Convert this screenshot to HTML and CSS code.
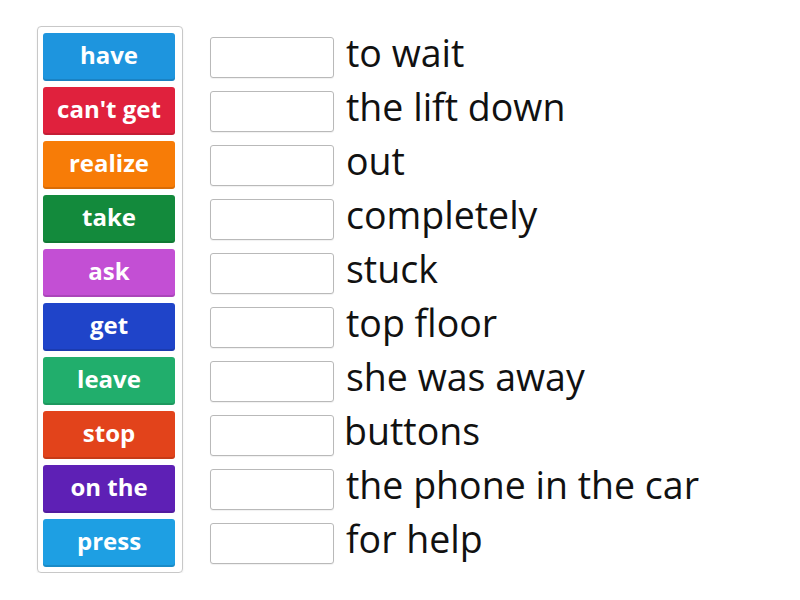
FILE: index.html
```html
<!DOCTYPE html>
<html>
<head>
<meta charset="utf-8">
<link rel="stylesheet" href="styles.css">
</head>
<body>
<div class="board">
  <div class="bank">
    <div class="tile c1">have</div>
    <div class="tile c2">can't get</div>
    <div class="tile c3">realize</div>
    <div class="tile c4">take</div>
    <div class="tile c5">ask</div>
    <div class="tile c6">get</div>
    <div class="tile c7">leave</div>
    <div class="tile c8">stop</div>
    <div class="tile c9">on the</div>
    <div class="tile c10">press</div>
  </div>
  <div class="targets">
    <div class="row"><div class="slot"></div><span class="phrase">to wait</span></div>
    <div class="row"><div class="slot"></div><span class="phrase">the lift down</span></div>
    <div class="row"><div class="slot"></div><span class="phrase">out</span></div>
    <div class="row"><div class="slot"></div><span class="phrase">completely</span></div>
    <div class="row"><div class="slot"></div><span class="phrase">stuck</span></div>
    <div class="row"><div class="slot"></div><span class="phrase">top floor</span></div>
    <div class="row"><div class="slot"></div><span class="phrase">she was away</span></div>
    <div class="row"><div class="slot"></div><span class="phrase shift">buttons</span></div>
    <div class="row"><div class="slot"></div><span class="phrase">the phone in the car</span></div>
    <div class="row"><div class="slot"></div><span class="phrase">for help</span></div>
  </div>
</div>
</body>
</html>
```

FILE: styles.css
```css
html, body {
  margin: 0;
  padding: 0;
  background: #ffffff;
  font-family: "Open Sans", "Noto Sans", sans-serif;
}

.board {
  display: flex;
  align-items: flex-start;
  padding: 26px 0 0 37px;
}

.bank {
  display: flex;
  flex-direction: column;
  gap: 6px;
  padding: 6px 7px 5px 5px;
  border: 1px solid #c8c8c8;
  border-radius: 4px;
  box-shadow: 0 1px 2px rgba(0,0,0,0.08);
}

.tile {
  width: 132px;
  height: 48px;
  border-radius: 3px;
  color: #ffffff;
  font-weight: 700;
  font-size: 24px;
  display: flex;
  align-items: center;
  justify-content: center;
  box-shadow: inset 0 -2px 0 rgba(0,0,0,0.12);
  line-height: 1;
  padding-bottom: 5px;
  box-sizing: border-box;
}

.c1 { background: #1e95de; }
.c2 { background: #e0213d; }
.c3 { background: #f77c07; }
.c4 { background: #138a3c; }
.c5 { background: #c34fd4; }
.c6 { background: #1f44c9; }
.c7 { background: #21ae6c; }
.c8 { background: #e2431b; }
.c9 { background: #5e20b5; }
.c10 { background: #1e9fe3; }

.targets {
  display: flex;
  flex-direction: column;
  gap: 6px;
  margin-left: 27px;
  padding-top: 7px;
}

.row {
  height: 48px;
  display: flex;
  align-items: center;
}

.slot {
  width: 124px;
  height: 41px;
  box-sizing: border-box;
  border: 1px solid #b9b9b9;
  border-radius: 3px;
  background: #ffffff;
  box-shadow: 0 1px 1px rgba(0,0,0,0.06);
}

.phrase {
  margin-left: 12px;
  font-size: 37.5px;
  color: #111111;
  line-height: 1;
  white-space: nowrap;
  padding-bottom: 9px;
}

.shift {
  margin-left: 10px;
}
```
